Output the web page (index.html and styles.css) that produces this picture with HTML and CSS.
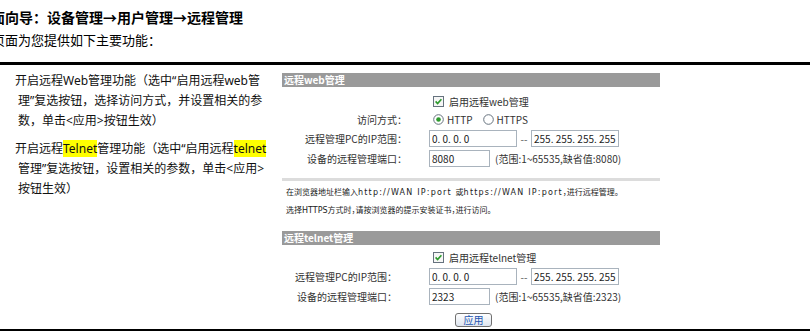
FILE: index.html
```html
<!DOCTYPE html>
<html lang="zh-CN">
<head>
    <meta charset="UTF-8">
    <meta name="viewport" content="width=device-width, initial-scale=1.0">
    <title>远程管理</title>
    <link rel="stylesheet" href="styles.css">
</head>
<body>

    <div class="guide">
        <p class="path">页面向导：设备管理→用户管理→远程管理</p>
        <p class="intro">页面为您提供如下主要功能：</p>
    </div>

    <div class="content">
        <div class="desc">
            <p>开启远程Web管理功能（选中“启用远程web管<br>理”复选按钮，选择访问方式，并设置相关的参<br>数，单击&lt;应用&gt;按钮生效）</p>
            <p>开启远程<span class="hl">Telnet</span>管理功能（选中“启用远程<span class="hl">telnet</span><br>管理”复选按钮，设置相关的参数，单击&lt;应用&gt;<br>按钮生效）</p>
        </div>

        <div class="shot">
            <div class="bar">远程web管理</div>
            <div class="form web">
                <div class="label"></div>
                <div class="field">
                    <svg class="check" width="11" height="11" viewBox="0 0 11 11"><rect x="0.5" y="0.5" width="10" height="10" fill="#f6f6f6" stroke="#66727e"/><path d="M2.6 5.4 L4.6 7.6 L8.4 3.2" fill="none" stroke="#2c9a2c" stroke-width="1.6"/></svg>
                    <span>启用远程web管理</span>
                </div>

                <div class="label">访问方式：</div>
                <div class="field">
                    <svg class="radio" width="11" height="11" viewBox="0 0 11 11"><circle cx="5.5" cy="5.5" r="4.8" fill="#fff" stroke="#66727e"/><circle cx="5.5" cy="5.5" r="2.3" fill="#2c9a2c"/></svg>
                    <span class="opt">HTTP</span>
                    <svg class="radio" width="11" height="11" viewBox="0 0 11 11"><circle cx="5.5" cy="5.5" r="4.8" fill="#fff" stroke="#66727e"/></svg>
                    <span>HTTPS</span>
                </div>

                <div class="label">远程管理PC的IP范围：</div>
                <div class="field">
                    <input class="ip" type="text" value="0. 0. 0. 0">
                    <span class="dash">--</span>
                    <input class="ip" type="text" value="255. 255. 255. 255">
                </div>

                <div class="label">设备的远程管理端口：</div>
                <div class="field">
                    <input class="port" type="text" value="8080">
                    <span class="range">(范围:1~65535,缺省值:8080)</span>
                </div>
            </div>
            <div class="sep"></div>

            <p class="tip">在浏览器地址栏输入<span class="url">http://WAN IP:port </span>或<span class="url">https://WAN IP:port</span>，进行远程管理。<br>选择HTTPS方式时，请按浏览器的提示安装证书，进行访问。</p>

            <div class="bar">远程telnet管理</div>
            <div class="form telnet">
                <div class="label"></div>
                <div class="field">
                    <svg class="check" width="11" height="11" viewBox="0 0 11 11"><rect x="0.5" y="0.5" width="10" height="10" fill="#f6f6f6" stroke="#66727e"/><path d="M2.6 5.4 L4.6 7.6 L8.4 3.2" fill="none" stroke="#2c9a2c" stroke-width="1.6"/></svg>
                    <span>启用远程telnet管理</span>
                </div>

                <div class="label">远程管理PC的IP范围：</div>
                <div class="field">
                    <input class="ip" type="text" value="0. 0. 0. 0">
                    <span class="dash">--</span>
                    <input class="ip" type="text" value="255. 255. 255. 255">
                </div>

                <div class="label">设备的远程管理端口：</div>
                <div class="field">
                    <input class="port" type="text" value="2323">
                    <span class="range">(范围:1~65535,缺省值:2323)</span>
                </div>
            </div>

            <div class="actions">
                <button type="button">应用</button>
            </div>
        </div>
    </div>

</body>
</html>
```

FILE: styles.css
```css
body {
    margin: 0;
    font-family: "Noto Sans CJK SC", "Noto Sans", sans-serif;
    color: #000;
    overflow: hidden;
    background: #fff;
}

p {
    margin: 0;
}

/* page guide */
.guide {
    padding: 7px 0 12px;
    border-bottom: 3px solid #000;
}

.path {
    margin-left: -23px;
    font-size: 14px;
    font-weight: bold;
    line-height: 20px;
    white-space: nowrap;
}

.intro {
    margin: 3px 0 0 -8px;
    font-size: 13px;
    line-height: 20px;
    white-space: nowrap;
}

.content {
    display: flex;
    border-bottom: 3px solid #000;
}

/* left description */
.desc {
    width: 250px;
    padding: 6px 0 0 15px;
    font-family: "Noto Sans", "Noto Sans CJK SC", sans-serif;
    font-size: 12px;
    color: #111;
}

.desc p {
    padding-left: 3px;
    text-indent: -3px;
    line-height: 20px;
    margin-bottom: 8px;
    white-space: nowrap;
}

.hl {
    background-color: #ffff00;
}

/* router screen */
.shot {
    width: 378px;
    margin: 8px 0 0 17px;
    padding-bottom: 2px;
    font-size: 10px;
    color: #333;
}

.bar {
    height: 14px;
    line-height: 14px;
    padding-left: 2px;
    background-color: #9a9a9a;
    color: #fff;
    font-weight: bold;
    font-size: 10px;
}

.form {
    display: grid;
    grid-template-columns: 147px 1fr;
    grid-auto-rows: 20px;
    margin-top: 5px;
}

.form.web {
    grid-template-rows: 18px 18px 20px 20px;
}

.form.telnet {
    grid-template-rows: 18px 20px 20px;
    margin-top: 3px;
}

.label {
    display: flex;
    align-items: center;
    justify-content: flex-end;
    padding-right: 22px;
    white-space: nowrap;
}

.telnet .label {
    padding-right: 32px;
}

.field {
    display: flex;
    align-items: center;
    white-space: nowrap;
}

.check {
    margin: 0 5px 0 4px;
}

.radio {
    margin: 0 3px 0 4px;
}

.opt {
    margin-right: 6px;
}

input {
    box-sizing: border-box;
    height: 17px;
    margin: 0;
    padding: 0 2px;
    border: 1px solid #a9b3bd;
    font-family: "Noto Sans CJK SC", sans-serif;
    font-size: 10px;
    color: #222;
    background: #fff;
}

.ip {
    width: 88px;
}

.port {
    width: 61px;
}

.dash {
    width: 14px;
    text-align: center;
    color: #555;
}

.range {
    margin-left: 5px;
}

.sep {
    height: 3px;
    margin-top: 10px;
    background-color: #dcdcdc;
}

.tip {
    margin: 3px 0 0 4px;
    font-family: "DejaVu Sans", "Noto Sans CJK SC", sans-serif;
    font-feature-settings: "halt";
    font-size: 8px;
    line-height: 18px;
    color: #222;
    white-space: nowrap;
}

.url {
    letter-spacing: 1.2px;
}

.tip + .bar {
    margin-top: 11px;
}

.actions {
    margin-top: 6px;
    padding-left: 173px;
}

button {
    width: 37px;
    height: 14px;
    padding: 0;
    border: 1px solid #707070;
    border-radius: 3px;
    background: linear-gradient(#ffffff, #dde4ee);
    font-family: "Noto Sans CJK SC", sans-serif;
    font-size: 10px;
    line-height: 12px;
    color: #1d55b0;
}
```
